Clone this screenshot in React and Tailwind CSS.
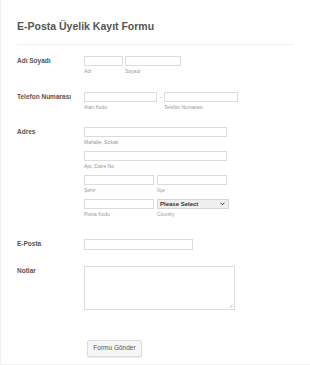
import React from 'react';

const font = { fontFamily: '"Liberation Sans", Arial, sans-serif' };

const Box = ({ className = '' }) => (
  <div className={`h-[10px] border border-[#dcdcdc] bg-white ${className}`} />
);

const Sub = ({ children }) => (
  <div className="mt-[2px] text-[5px] leading-[7px] text-[#9a9a9a]">{children}</div>
);

const Row = ({ label, className = '', children }) => (
  <div className={`flex ${className}`}>
    <div className="w-[67px] shrink-0 text-[6.5px] font-bold leading-[10px] text-[#555]">{label}</div>
    <div className="flex-1">{children}</div>
  </div>
);

export default function App() {
  return (
    <div style={font} className="h-[365px] w-[310px] border-b border-l border-[#f1f1f1] bg-white px-[16px]">
      <h1 className="pt-[20px] text-[10.5px] font-bold leading-[13px] text-[#555]">E-Posta Üyelik Kayıt Formu</h1>
      <div className="mt-[11px] h-px bg-[#f0f0f0]" />

      <Row label="Adı Soyadı" className="mt-[11px]">
        <div className="flex gap-[2px]">
          <div className="w-[39px]">
            <Box />
            <Sub>Adı</Sub>
          </div>
          <div className="w-[56px]">
            <Box />
            <Sub>Soyadı</Sub>
          </div>
        </div>
      </Row>

      <Row label="Telefon Numarası" className="mt-[17px]">
        <div className="flex">
          <div className="w-[73px]">
            <Box />
            <Sub>Alan Kodu</Sub>
          </div>
          <div className="w-[7px] text-center text-[6px] leading-[10px] text-[#888]">-</div>
          <div className="w-[74px]">
            <Box />
            <Sub>Telefon Numarası</Sub>
          </div>
        </div>
      </Row>

      <Row label="Adres" className="mt-[16px]">
        <div className="flex flex-col gap-[5px]">
          <div className="w-[143px]">
            <Box />
            <Sub>Mahalle, Sokak</Sub>
          </div>
          <div className="w-[143px]">
            <Box />
            <Sub>Apt. Daire No</Sub>
          </div>
          <div className="flex gap-[3px]">
            <div className="w-[70px]">
              <Box />
              <Sub>Şehir</Sub>
            </div>
            <div className="w-[70px]">
              <Box />
              <Sub>İlçe</Sub>
            </div>
          </div>
          <div className="flex gap-[3px]">
            <div className="w-[70px]">
              <Box />
              <Sub>Posta Kodu</Sub>
            </div>
            <div className="w-[72px]">
              <div className="flex h-[10px] items-center justify-between border border-[#d6d6d6] bg-[#efefef] pl-[2px] pr-[3px]">
                <span className="text-[6px] font-bold leading-none text-[#333]">Please Select</span>
                <svg width="5" height="4" viewBox="0 0 10 7">
                  <path d="M1 1l4 4 4-4" fill="none" stroke="#333" strokeWidth="2" />
                </svg>
              </div>
              <Sub>Country</Sub>
            </div>
          </div>
        </div>
      </Row>

      <Row label="E-Posta" className="mt-[21px]">
        <div className="h-[11px] w-[109px] border border-[#dcdcdc] bg-white" />
      </Row>

      <Row label="Notlar" className="mt-[16px]">
        <div className="relative h-[44px] w-[151px] border border-[#dcdcdc] bg-white">
          <svg className="absolute bottom-[1px] right-[1px]" width="4" height="4" viewBox="0 0 8 8">
            <path d="M7 1L1 7M7 4L4 7" stroke="#999" strokeWidth="1" />
          </svg>
        </div>
      </Row>

      <div className="mt-[23px] pl-[70px]">
        <button className="h-[17px] w-[55px] rounded-[2px] border border-[#dcdcdc] bg-[#f6f6f6] text-[6.5px] leading-none text-[#555] shadow-[0_1px_1px_rgba(0,0,0,0.08)]">
          Formu Gönder
        </button>
      </div>
    </div>
  );
}
